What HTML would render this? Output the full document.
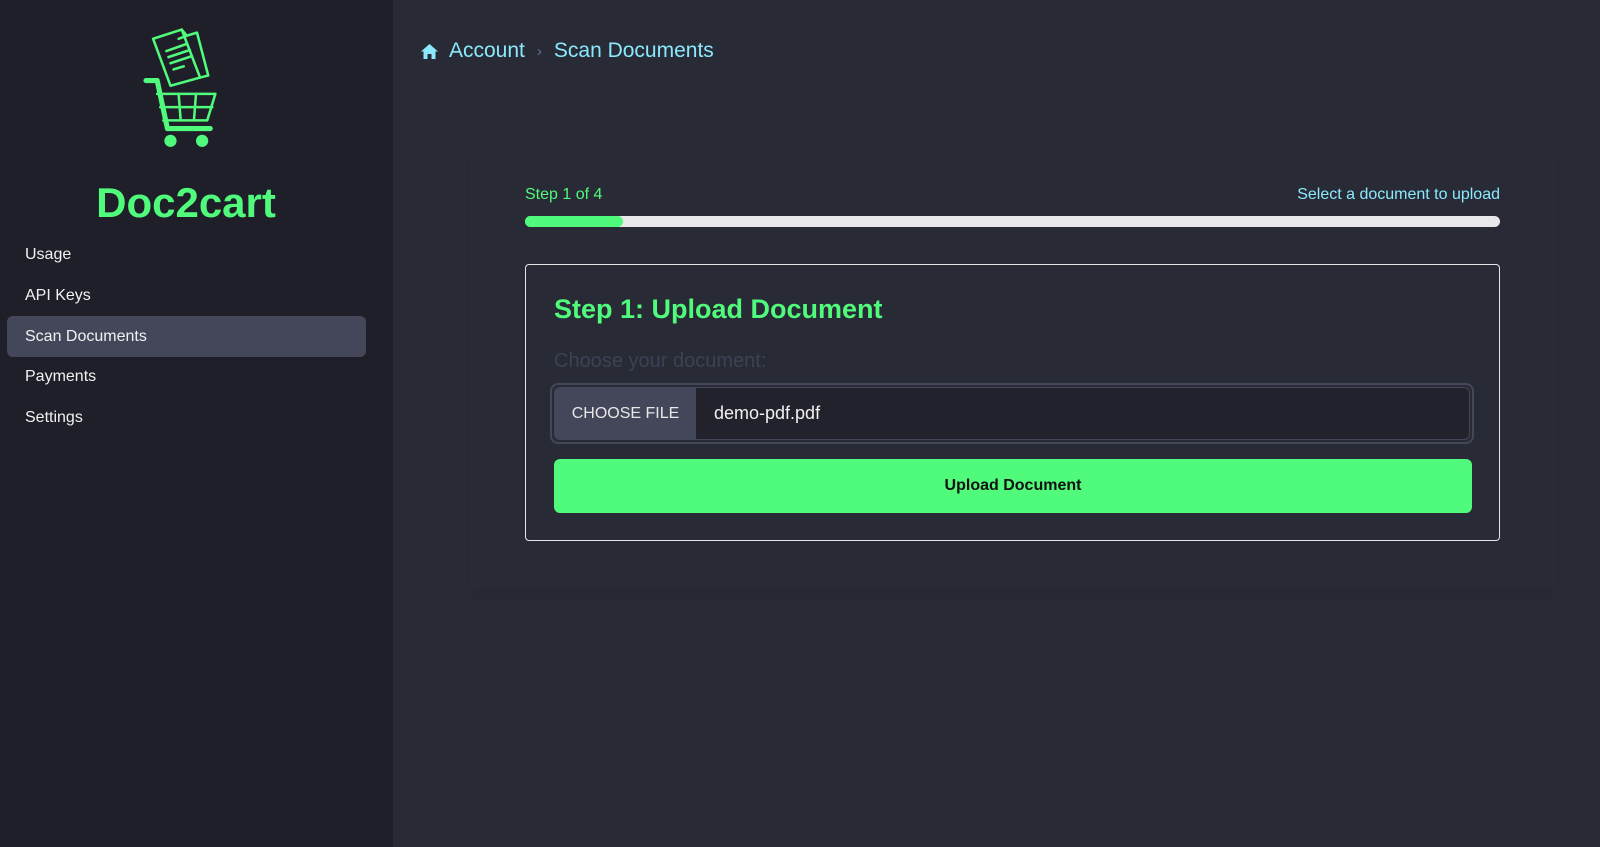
<!DOCTYPE html>
<html><head><meta charset="utf-8"><style>
*{box-sizing:border-box;margin:0;padding:0}
body{width:1600px;height:847px;background:#282a36;font-family:"Liberation Sans",sans-serif;position:relative;overflow:hidden}
.side{position:absolute;left:0;top:0;width:393px;height:847px;background:#1e1f29}
.brand{position:absolute;left:0;width:372px;top:179px;text-align:center;color:#50fa7b;font-weight:bold;font-size:42px}
.nav a{position:absolute;left:7px;width:359px;height:41px;line-height:41px;padding-left:18px;color:#f1f1f1;font-size:16px;border-radius:6px;text-decoration:none}
.nav a.act{background:#44475a}
.crumb{position:absolute;left:421px;top:39px;font-size:21px;color:#8be9fd;display:flex;align-items:center}
.shadow{position:absolute;left:470px;top:150px;width:1087px;height:438px;box-shadow:0 4px 10px rgba(0,0,0,.07)}
.lbl{position:absolute;top:186px;font-size:16px}
.bar{position:absolute;left:525px;top:216px;width:975px;height:11px;border-radius:6px;background:#e8e8ea}
.bar div{width:98px;height:11px;border-radius:6px;background:#50fa7b}
.card{position:absolute;left:525px;top:264px;width:975px;height:277px;border:1px solid #e6e6e6;border-radius:4px}
h2{position:absolute;left:28px;top:29px;color:#50fa7b;font-size:27px}
.ch{position:absolute;left:28px;top:85px;color:#3b4254;font-size:20px}
.file{position:absolute;left:24px;top:118px;width:924px;height:61px;border:2px solid #44475a;border-radius:8px;padding:2px}
.file .in{display:flex;height:53px;border:1px solid #44475a;border-radius:6px;overflow:hidden;background:#21222c}
.btn{width:141px;background:#44475a;color:#e8e8e8;font-size:16px;display:flex;align-items:center;justify-content:center}
.fn{color:#f1f1f1;font-size:18px;padding-left:18px;display:flex;align-items:center}
.up{position:absolute;left:28px;top:194px;width:918px;height:54px;background:#50fa7b;border-radius:6px;color:#111;font-size:16px;font-weight:bold;display:flex;align-items:center;justify-content:center}
</style></head><body>
<div class="side">
<svg style="position:absolute;left:0;top:0" width="393" height="170" viewBox="0 0 385 166.6" fill="none" stroke="#50fa7b" stroke-width="2.5" stroke-linejoin="round" stroke-linecap="round">
<path d="M150 38 L178 29 L196 76 L167 84 Z"/><path d="M178 29 L183 35 L175 38"/><path d="M183 35 L193 32 L204 74 L196 76"/>
<path d="M163 50 L183 43 M165 56 L186 49 M167 62 L188 55 M170 68 L180 65"/>
<path d="M143 79 H154 L164 126 H206" stroke-width="5"/><path d="M154 92 H211 L203 118 H160"/>
<path d="M157 105 H208 M175 92 L177 118 M192 92 L190 118"/>
<circle cx="167" cy="138" r="6" fill="#50fa7b" stroke="none"/><circle cx="198" cy="138" r="6" fill="#50fa7b" stroke="none"/>
</svg>
<div class="brand">Doc2cart</div>
<div class="nav">
<a style="top:234px">Usage</a><a style="top:275px">API Keys</a><a class="act" style="top:316px">Scan Documents</a><a style="top:356px">Payments</a><a style="top:397px">Settings</a>
</div></div>
<div class="crumb"><svg width="17" height="15" viewBox="0 0 17 15"><path d="M8.5 0 L17 7.5 H14.5 V15 H10.5 V10 H6.5 V15 H2.5 V7.5 H0 Z" fill="#8be9fd"/></svg><span style="margin-left:11px">Account</span><span style="margin:0 12px;color:#6272a4;font-size:15px">›</span><span>Scan Documents</span></div>
<div class="shadow"></div>
<div class="lbl" style="left:525px;color:#50fa7b">Step 1 of 4</div>
<div class="lbl" style="right:100px;color:#8be9fd">Select a document to upload</div>
<div class="bar"><div></div></div>
<div class="card">
<h2>Step 1: Upload Document</h2>
<div class="ch">Choose your document:</div>
<div class="file"><div class="in"><div class="btn">CHOOSE FILE</div><div class="fn">demo-pdf.pdf</div></div></div>
<div class="up">Upload Document</div>
</div>
</body></html>
